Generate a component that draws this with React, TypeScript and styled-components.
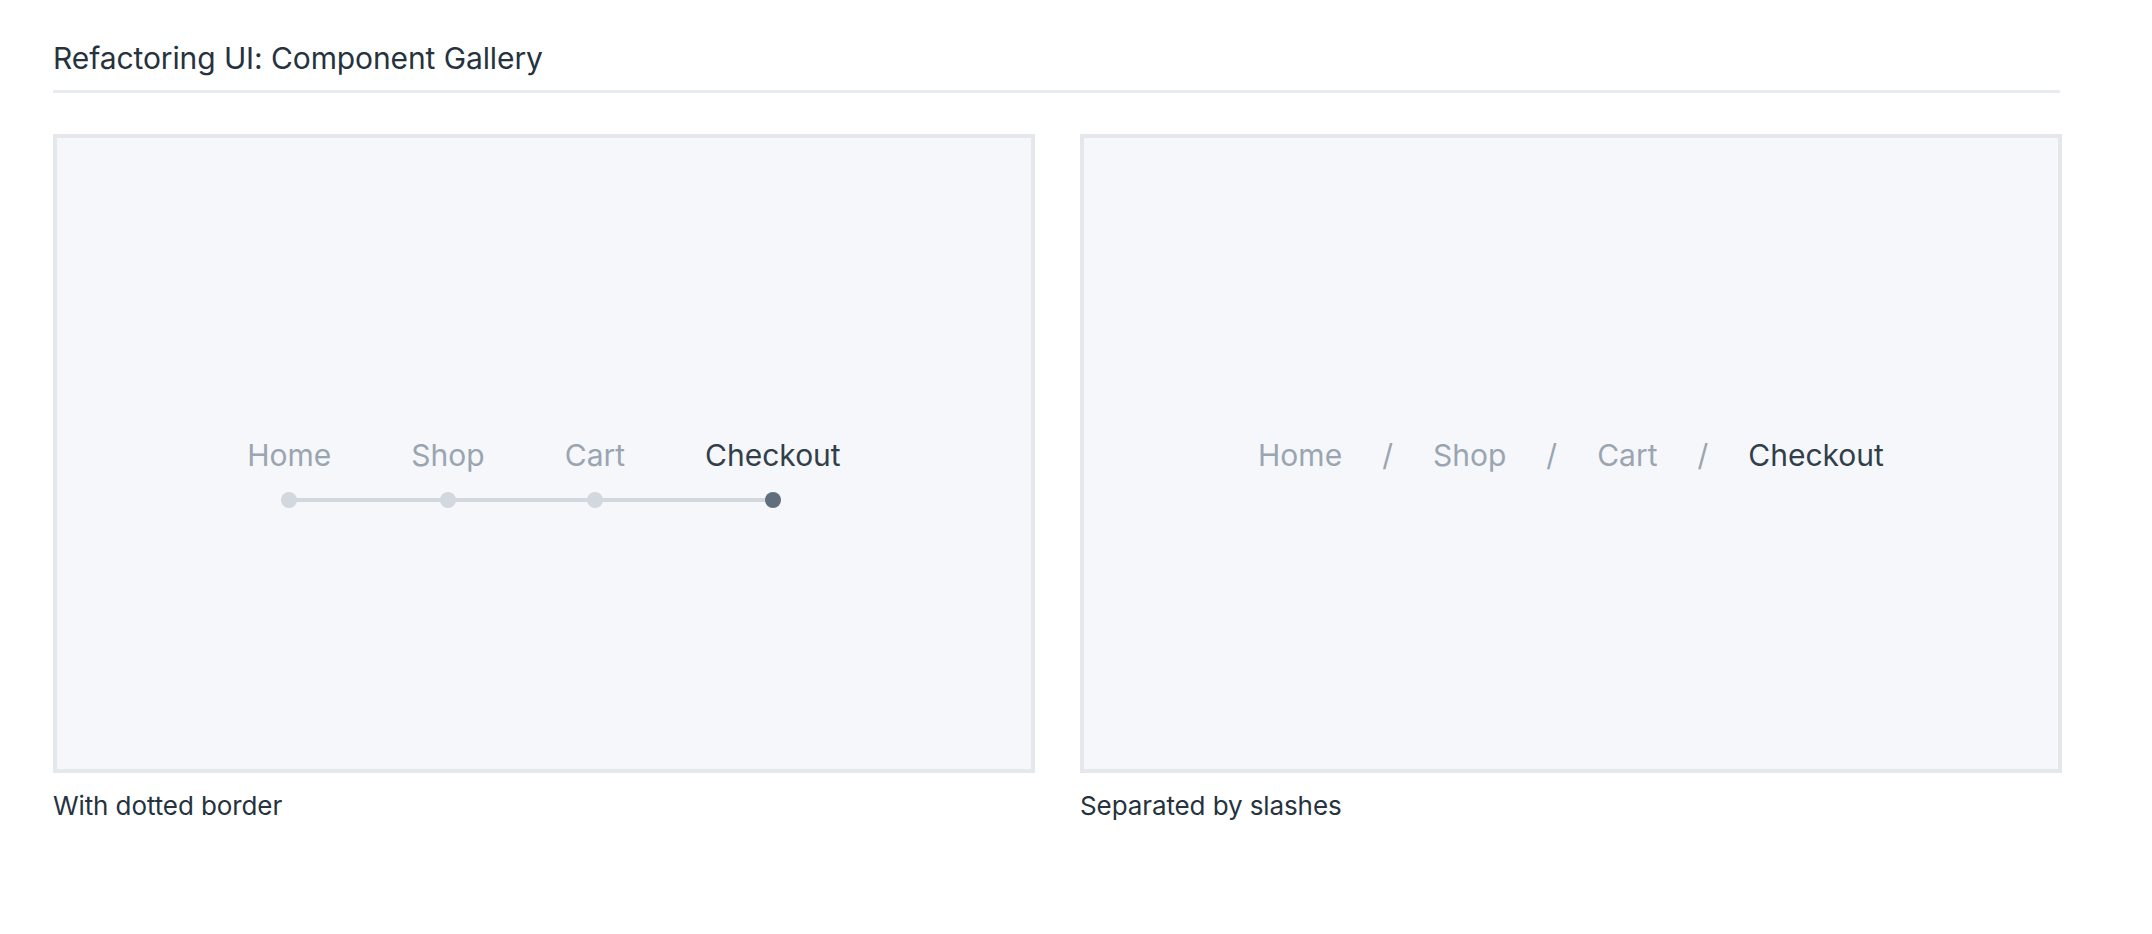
import React from "react";
import styled, { createGlobalStyle } from "styled-components";

const GlobalStyle = createGlobalStyle`
  html, body {
    margin: 0;
    padding: 0;
    background: #ffffff;
  }
  body {
    font-family: Inter, "Noto Sans", "Liberation Sans", sans-serif;
    color: #323f4b;
  }
`;

const steps = ["Home", "Shop", "Cart", "Checkout"];

const App = () => {
  return (
    <>
      <GlobalStyle />
      <Page>
        <Title>Refactoring UI: Component Gallery</Title>
        <Divider />
        <Gallery>
          <Figure>
            <Panel>
              <Track>
                {steps.map((step, i) => (
                  <Step key={step} active={i === steps.length - 1}>
                    {step}
                  </Step>
                ))}
              </Track>
            </Panel>
            <Caption>With dotted border</Caption>
          </Figure>
          <Figure>
            <Panel>
              <Crumbs>
                {steps.map((step, i) => (
                  <React.Fragment key={step}>
                    {i > 0 && <Slash>/</Slash>}
                    <Crumb active={i === steps.length - 1}>{step}</Crumb>
                  </React.Fragment>
                ))}
              </Crumbs>
            </Panel>
            <Caption>Separated by slashes</Caption>
          </Figure>
        </Gallery>
      </Page>
    </>
  );
};

export default App;

const Page = styled.div`
  padding: 41px 90px 60px 53px;
`;

const Title = styled.h1`
  margin: 0;
  font-size: 30px;
  font-weight: 400;
  line-height: 34px;
  letter-spacing: -0.1px;
  color: #26333e;
`;

const Divider = styled.div`
  height: 3px;
  margin-top: 15px;
  margin-right: 2px;
  background: #e8ebef;
`;

const Gallery = styled.div`
  display: grid;
  grid-template-columns: 1fr 1fr;
  gap: 45px;
  margin-top: 41px;
`;

const Figure = styled.div`
  display: flex;
  flex-direction: column;
`;

const Panel = styled.div`
  height: 639px;
  box-sizing: border-box;
  padding-top: 3px;
  border: 4px solid #e4e7eb;
  background: #f5f7fa;
  display: flex;
  align-items: center;
  justify-content: center;
`;

const Caption = styled.div`
  margin-top: 17px;
  font-size: 26px;
  line-height: 32px;
  letter-spacing: -0.1px;
  color: #26333e;
`;

const Track = styled.ul`
  position: relative;
  display: flex;
  gap: 80px;
  margin: 0;
  padding: 0;
  list-style: none;

  &::before {
    content: "";
    position: absolute;
    left: 38px;
    right: 68px;
    top: calc(100% + 25px);
    height: 4px;
    background: #d2d8de;
  }
`;

const Step = styled.li<{ active?: boolean }>`
  position: relative;
  font-size: 30px;
  line-height: 36px;
  color: ${(p) => (p.active ? "#323f4b" : "#9aa5b1")};

  &::after {
    content: "";
    position: absolute;
    left: 50%;
    top: calc(100% + 19px);
    width: 16px;
    height: 16px;
    margin-left: -8px;
    border-radius: 50%;
    background: ${(p) => (p.active ? "#616e7c" : "#d2d8de")};
  }
`;

const Crumbs = styled.nav`
  display: flex;
  align-items: center;
  gap: 40px;
`;

const Crumb = styled.span<{ active?: boolean }>`
  font-size: 30px;
  line-height: 36px;
  color: ${(p) => (p.active ? "#323f4b" : "#9aa5b1")};
`;

const Slash = styled.span`
  font-size: 30px;
  line-height: 36px;
  color: #9aa5b1;
`;
